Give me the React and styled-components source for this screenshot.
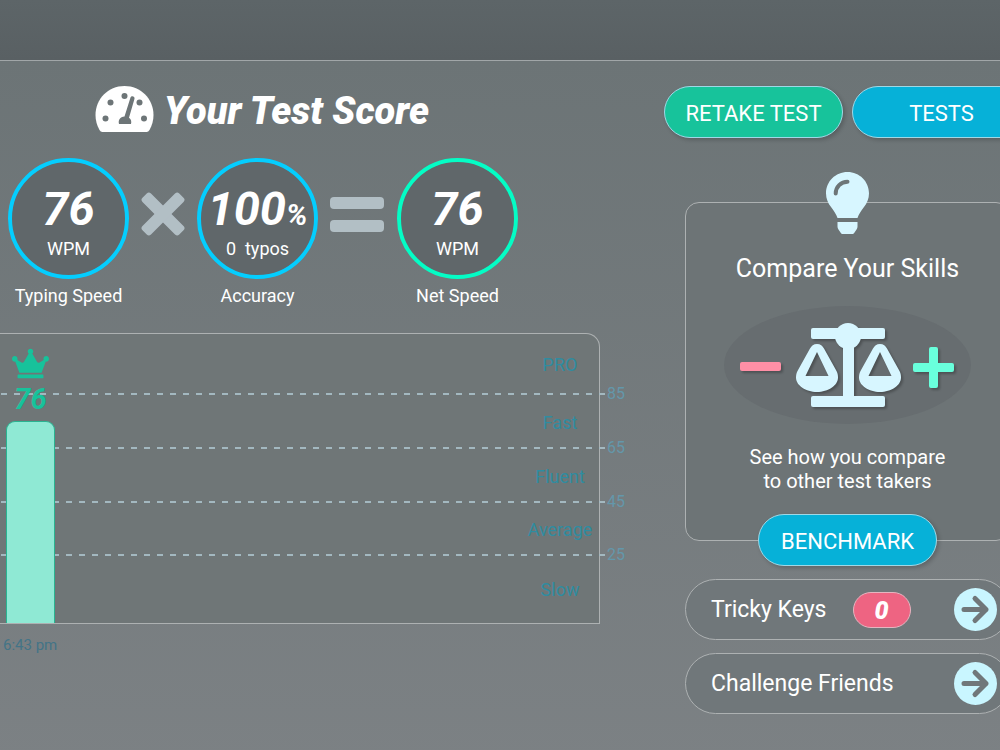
import styled, { createGlobalStyle } from 'styled-components';
import { FaCrown } from 'react-icons/fa';

const GlobalStyle = createGlobalStyle`
  * {
    box-sizing: border-box;
  }
  body {
    margin: 0;
    background: #7c8184;
    color: white;
    font-family: Roboto, sans-serif;
  }
`;
const Page = styled.div`
  min-height: 100vh;
  display: flex;
  flex-direction: column;
  overflow: hidden;
`;
const TopBar = styled.header`
  height: 61px;
  background: linear-gradient(#5d6568, #596063);
  border-bottom: 1px solid #a1a6a8;
`;
const Main = styled.main`
  flex: 1;
  display: grid;
  grid-template-columns: minmax(0, 1fr) 367px;
  gap: 64px;
  margin-right: -31px;
  padding: 25px 0 36px;
  background: linear-gradient(#6c7476, #7c8184);
`;
const Score = styled.section`
  min-width: 0;
`;
const Heading = styled.div`
  display: flex;
  align-items: center;
  gap: 10px;
  height: 46px;
  padding-left: 95px;
`;
const Title = styled.h1`
  margin: 0;
  padding-top: 4px;
  font-size: 38px;
  font-weight: 900;
  font-style: italic;
  line-height: 46px;
  white-space: nowrap;
`;
const Results = styled.div`
  display: flex;
  gap: 12px;
  padding: 26px 0 0 8px;
`;
const Result = styled.div`
  width: 121px;
  display: flex;
  flex-direction: column;
  align-items: center;
  gap: 6px;
  font-size: 18px;
  line-height: 22px;
  white-space: nowrap;
`;
const Circle = styled.div`
  width: 121px;
  height: 121px;
  display: flex;
  flex-direction: column;
  align-items: center;
  padding-top: 22px;
  border: 4px solid ${(props) => props.$color};
  border-radius: 50%;
  background: #60676a;
`;
const Value = styled.div`
  height: 50px;
  font-size: 47px;
  font-weight: 700;
  font-style: italic;
  line-height: 50px;
  small {
    font-size: 30px;
    line-height: 30px;
  }
`;
const Unit = styled.div`
  padding-top: 4px;
  white-space: pre;
`;
const Sign = styled.svg`
  flex: none;
  height: 44px;
  margin-top: 34px;
  fill: #b2bfc5;
`;
const Chart = styled.div`
  position: relative;
  margin-top: 26px;
  border: 1px solid #adb1b2;
  border-width: 1px 1px 1px 0;
  border-top-right-radius: 14px;
  background: #6f7677;
`;
const Level = styled.div`
  position: relative;
  height: ${(props) => props.$height}px;
  display: flex;
  align-items: center;
  justify-content: flex-end;
  color: #2f8ca0;
  font-size: 18px;
  &::after {
    content: '';
    display: ${(props) => (props.$line ? 'block' : 'none')};
    position: absolute;
    left: 0;
    right: -6px;
    bottom: 0;
    height: 2px;
    background: repeating-linear-gradient(
      to left,
      #a3b8c0 0 6px,
      transparent 6px 13px
    );
  }
`;
const LevelName = styled.span`
  width: 78px;
  text-align: center;
`;
const Tick = styled.span`
  position: absolute;
  right: -26px;
  bottom: -9px;
  color: #6497aa;
  font-size: 16px;
  line-height: 20px;
`;
const BarColumn = styled.div`
  position: absolute;
  left: 6px;
  bottom: 0;
  width: 49px;
  display: flex;
  flex-direction: column;
  align-items: center;
  color: #17c29b;
`;
const BarValue = styled.div`
  padding-bottom: 5px;
  font-size: 29px;
  font-weight: 700;
  font-style: italic;
  line-height: 34px;
`;
const Bar = styled.div`
  width: 100%;
  border: 1px solid #2ab391;
  border-bottom: 0;
  border-radius: 9px 9px 0 0;
  background: #8fe9d4;
`;
const Time = styled.div`
  padding: 11px 0 0 3px;
  color: #437487;
  font-size: 15px;
  line-height: 20px;
`;
const Side = styled.aside`
  min-width: 0;
`;
const Buttons = styled.div`
  display: flex;
  gap: 9px;
`;
const Button = styled.button`
  width: 179px;
  height: 52px;
  flex: none;
  padding: 2px 0 0;
  border: 1px solid #9fd8e6;
  border-radius: 26px;
  background: ${(props) => (props.$green ? '#17c39b' : '#06b1d8')};
  box-shadow: 2px 2px 4px rgba(0, 0, 0, 0.2);
  color: white;
  font-family: inherit;
  font-size: 22px;
  cursor: pointer;
`;
const Compare = styled.section`
  display: flex;
  flex-direction: column;
  align-items: center;
  margin: 64px 21px 38px;
  border: 1px solid #adb1b2;
  border-radius: 14px;
  background: #6d7476;
  text-align: center;
  > svg {
    margin-top: -31px;
  }
  > button {
    margin: 21px 0 -26px;
  }
`;
const CompareTitle = styled.h2`
  margin: 19px 0 21px;
  font-size: 25px;
  font-weight: 400;
  line-height: 32px;
`;
const Balance = styled.div`
  width: 247px;
  height: 118px;
  display: flex;
  align-items: center;
  justify-content: center;
  border-radius: 50%;
  background: #676d70;
  svg {
    filter: drop-shadow(2px 2px 1px rgba(0, 0, 0, 0.25));
  }
`;
const CompareText = styled.p`
  margin: 21px 0 0;
  font-size: 20px;
  line-height: 24px;
`;
const SideLink = styled.a`
  height: 61px;
  display: flex;
  align-items: center;
  gap: 26px;
  margin: 0 21px 13px;
  padding: 0 12px 0 25px;
  border: 1px solid #adb1b2;
  border-radius: 31px;
  background: #70777a;
  color: white;
  font-size: 23px;
  text-decoration: none;
  svg {
    margin-left: auto;
  }
`;
const Count = styled.span`
  width: 58px;
  height: 36px;
  border: 1px solid #e5b5c0;
  border-radius: 18px;
  background: #ee6482;
  font-size: 25px;
  font-weight: 900;
  font-style: italic;
  line-height: 36px;
  text-align: center;
`;

const results = [
  { label: 'Typing Speed', value: '76', unit: 'WPM', color: '#04ceff' },
  { label: 'Accuracy', value: '100', percent: true, unit: '0  typos', color: '#04ceff' },
  { label: 'Net Speed', value: '76', unit: 'WPM', color: '#04fdc5' },
];
const levels = [
  { name: 'PRO', tick: 85, height: 61 },
  { name: 'Fast', tick: 65, height: 54 },
  { name: 'Fluent', tick: 45, height: 54 },
  { name: 'Average', tick: 25, height: 53 },
  { name: 'Slow', height: 67 },
];

const Gauge = () => (
  <svg width='59' height='46' viewBox='0 0 59 46'>
    <path
      fill='white'
      d='M29.500 0C13 0 .5 13 .5 29c0 5.500 1.500 10.500 4 15 .8 1.300 1.600 2 3 2h44c1.400 0 2.200-.7 3-2 2.500-4.500 4-9.500 4-15C58.500 13 46 0 29.500 0z'
    />
    <g fill='#6d7577'>
      <circle cx='29.500' cy='10' r='3' />
      <circle cx='15.500' cy='16.500' r='3' />
      <circle cx='44.500' cy='16.500' r='3' />
      <circle cx='10.500' cy='32.500' r='3' />
      <circle cx='49' cy='32.500' r='3' />
      <path d='M24 38c-1-4 1-7 5.500-7.500l6-19c.8-2.400 4.600-1.400 4 1.200l-5.500 19.100c2.200 1.600 2.700 3.800 2 6.200z' />
    </g>
  </svg>
);

const Times = () => (
  <Sign width='44' viewBox='0 0 44 44'>
    <rect x='-4' y='16' width='52' height='12' rx='3' transform='rotate(45 22 22)' />
    <rect x='-4' y='16' width='52' height='12' rx='3' transform='rotate(-45 22 22)' />
  </Sign>
);

const Equals = () => (
  <Sign width='55' viewBox='0 0 55 44'>
    <rect y='5' width='54' height='12' rx='4' />
    <rect y='28' width='54' height='12' rx='4' />
  </Sign>
);

const Bulb = () => (
  <svg width='43' height='62' viewBox='0 0 43 62'>
    <path
      fill='#d7f6ff'
      d='M21.500 0C9.500 0 0 9.500 0 21.300c0 5.400 2 10.200 5.200 13.900 2.400 2.800 5.200 7.300 6.300 10.800h20c1.100-3.500 3.900-8 6.300-10.800 3.200-3.700 5.200-8.500 5.200-13.900C43 9.500 33.500 0 21.500 0zM11.500 50h20v4.500c0 1-.3 1.900-.8 2.700L28.500 60.500c-.6 1-1.500 1.500-2.600 1.500h-8.800c-1.100 0-2-.5-2.600-1.500l-2.200-3.300c-.5-.8-.8-1.700-.8-2.700z'
    />
    <path
      d='M9.700 21.500c0-6.600 5.200-11.800 11.800-11.800'
      fill='none'
      stroke='#6d7577'
      strokeWidth='4'
      strokeLinecap='round'
    />
  </svg>
);

const Arrow = () => (
  <svg width='43' height='43' viewBox='0 0 43 43'>
    <circle cx='21.500' cy='21.500' r='21.500' fill='#c9f6ff' />
    <path
      d='M10 21.500h22M21 10.500l11 11-11 11'
      fill='none'
      stroke='#70777a'
      strokeWidth='5'
      strokeLinecap='round'
      strokeLinejoin='round'
    />
  </svg>
);

const pan =
  'M21 21c3.500 0 5.500 1.800 7 4.500L40.500 48c1 2 1.500 4 1.500 6.500C42 62.500 32 69 21 69S0 62.500 0 54.500C0 52 .5 50 1.500 48L14 25.500c1.500-2.700 3.500-4.500 7-4.500zM21 29L9.500 53h23z';

const Scales = () => (
  <svg width='216' height='88' viewBox='0 0 216 88'>
    <rect y='41' width='41' height='9' rx='2' fill='#ff8fa6' />
    <path
      fill='#69ffdc'
      d='M191 26h5q2 0 2 2v14h14q2 0 2 2v5q0 2-2 2h-14v14q0 2-2 2h-5q-2 0-2-2v-14h-14q-2 0-2-2v-5q0-2 2-2h14v-14q0-2 2-2z'
    />
    <g fill='#d7f6ff' transform='translate(56 2)'>
      <rect x='15' y='5' width='74' height='11' rx='2' />
      <circle cx='52' cy='13' r='13' />
      <rect x='47' y='13' width='11' height='64' />
      <rect x='15' y='73' width='74' height='11' rx='2' />
      <path fillRule='evenodd' d={pan} />
      <path fillRule='evenodd' d={pan} transform='translate(63 0)' />
    </g>
  </svg>
);

const ResultItem = ({ label, value, percent, unit, color }) => (
  <Result>
    <Circle $color={color}>
      <Value>
        {value}
        {percent && <small>%</small>}
      </Value>
      <Unit>{unit}</Unit>
    </Circle>
    {label}
  </Result>
);

function App() {
  return (
    <Page>
      <GlobalStyle />
      <TopBar />
      <Main>
        <Score>
          <Heading>
            <Gauge />
            <Title>Your Test Score</Title>
          </Heading>
          <Results>
            <ResultItem {...results[0]} />
            <Times />
            <ResultItem {...results[1]} />
            <Equals />
            <ResultItem {...results[2]} />
          </Results>
          <Chart>
            {levels.map((level) => (
              <Level key={level.name} $height={level.height} $line={level.tick}>
                <LevelName>{level.name}</LevelName>
                {level.tick && <Tick>{level.tick}</Tick>}
              </Level>
            ))}
            <BarColumn>
              <FaCrown size={37} />
              <BarValue>76</BarValue>
              <Bar style={{ height: 202 }} />
            </BarColumn>
          </Chart>
          <Time>6:43 pm</Time>
        </Score>
        <Side>
          <Buttons>
            <Button $green>RETAKE TEST</Button>
            <Button>TESTS</Button>
          </Buttons>
          <Compare>
            <Bulb />
            <CompareTitle>Compare Your Skills</CompareTitle>
            <Balance>
              <Scales />
            </Balance>
            <CompareText>
              See how you compare
              <br />
              to other test takers
            </CompareText>
            <Button>BENCHMARK</Button>
          </Compare>
          <SideLink href='#tricky-keys'>
            Tricky Keys
            <Count>0</Count>
            <Arrow />
          </SideLink>
          <SideLink href='#challenge'>
            Challenge Friends
            <Arrow />
          </SideLink>
        </Side>
      </Main>
    </Page>
  );
}

export default App;
